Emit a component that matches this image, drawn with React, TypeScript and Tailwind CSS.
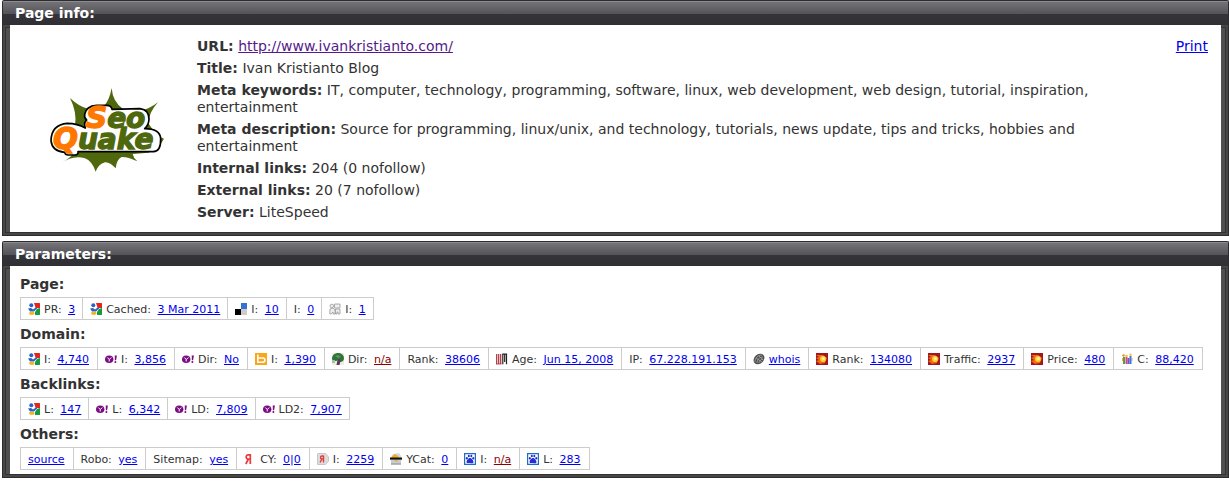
import type { ReactNode } from 'react';

type IconName =
  | 'google'
  | 'delicious'
  | 'digg'
  | 'yahoo'
  | 'bing'
  | 'dmoz'
  | 'archive'
  | 'whois'
  | 'semrush'
  | 'compete'
  | 'yandex'
  | 'yandexIndex'
  | 'yaca'
  | 'baidu';

type Param = {
  icon?: IconName;
  label?: string;
  value: string;
  missing?: boolean;
};

type Group = {
  title: string;
  wide?: boolean;
  params: Param[];
};

const GROUPS: Group[] = [
  {
    title: 'Page:',
    params: [
      { icon: 'google', label: 'PR:', value: '3' },
      { icon: 'google', label: 'Cached:', value: '3 Mar 2011' },
      { icon: 'delicious', label: 'I:', value: '10' },
      { label: 'I:', value: '0' },
      { icon: 'digg', label: 'I:', value: '1' },
    ],
  },
  {
    title: 'Domain:',
    wide: true,
    params: [
      { icon: 'google', label: 'I:', value: '4,740' },
      { icon: 'yahoo', label: 'I:', value: '3,856' },
      { icon: 'yahoo', label: 'Dir:', value: 'No' },
      { icon: 'bing', label: 'I:', value: '1,390' },
      { icon: 'dmoz', label: 'Dir:', value: 'n/a', missing: true },
      { label: 'Rank:', value: '38606' },
      { icon: 'archive', label: 'Age:', value: 'Jun 15, 2008' },
      { label: 'IP:', value: '67.228.191.153' },
      { icon: 'whois', value: 'whois' },
      { icon: 'semrush', label: 'Rank:', value: '134080' },
      { icon: 'semrush', label: 'Traffic:', value: '2937' },
      { icon: 'semrush', label: 'Price:', value: '480' },
      { icon: 'compete', label: 'C:', value: '88,420' },
    ],
  },
  {
    title: 'Backlinks:',
    params: [
      { icon: 'google', label: 'L:', value: '147' },
      { icon: 'yahoo', label: 'L:', value: '6,342' },
      { icon: 'yahoo', label: 'LD:', value: '7,809' },
      { icon: 'yahoo', label: 'LD2:', value: '7,907' },
    ],
  },
  {
    title: 'Others:',
    wide: true,
    params: [
      { value: 'source' },
      { label: 'Robo:', value: 'yes' },
      { label: 'Sitemap:', value: 'yes' },
      { icon: 'yandex', label: 'CY:', value: '0|0' },
      { icon: 'yandexIndex', label: 'I:', value: '2259' },
      { icon: 'yaca', label: 'YCat:', value: '0' },
      { icon: 'baidu', label: 'I:', value: 'n/a', missing: true },
      { icon: 'baidu', label: 'L:', value: '283' },
    ],
  },
];

const ICONS: Record<IconName, ReactNode> = {
  google: (
    <>
      <path d="M6 0h5.500l.5.500V5H9.500L8 6 7 3z" fill="#e5231b" />
      <path d="M9 6l3-1v6.500l-.5.500H7V9z" fill="#159a3c" />
      <circle cx="3.300" cy="2.200" r="2" fill="#2a63c4" />
      <path d="M0 5.500L3 5l2 1.500L8.500 4 9 5.500 6 8.500H2z" fill="#2a63c4" />
      <ellipse cx="3.800" cy="10.200" rx="2.800" ry="1.800" fill="#f3b229" />
    </>
  ),
  delicious: (
    <>
      <path d="M0 0h6v6H0z" fill="#fff" />
      <path d="M6 0h6v6H6z" fill="#3274d1" />
      <path d="M0 6h6v6H0z" fill="#000" />
      <path d="M6 6h6v6H6z" fill="#ccc" />
    </>
  ),
  digg: (
    <g fill="#eee" stroke="#999" strokeWidth=".8">
      <circle cx="2.800" cy="3" r="1.800" />
      <path d="M5.500 1h5.500v4H5.500z" />
      <path d="M1 6l3-1 2 2v4H4V9l-2 2H.8z" />
      <path d="M6.500 6h4.500v5H9V9H8v2H6.500z" />
    </g>
  ),
  yahoo: (
    <>
      <ellipse cx="4.200" cy="6.200" rx="4.200" ry="3.800" fill="#7b0d83" />
      <path d="M2.300 4.500l2 2 2-2M4.200 6.500v2" stroke="#fff" strokeWidth="1" fill="none" />
      <path d="M9.700 2.500h2.200l-.8 4.700H9.900z" fill="#7b0d83" />
      <circle cx="10.400" cy="9" r="1" fill="#7b0d83" />
    </>
  ),
  bing: (
    <>
      <path d="M0 0h12v12H0z" fill="#faa61a" />
      <path
        d="M2.800 1.500V9.200h5a2 2 0 0 0 0-4.200H2.800"
        fill="none"
        stroke="#fff"
        strokeWidth="1.500"
      />
    </>
  ),
  dmoz: (
    <>
      <path d="M0 0h12v12H0z" fill="#eeeedb" />
      <path d="M0 6C0 2 3 0 6 0s6 2 6 5-2 4-4 4L7 7 4 8 1 8z" fill="#2f7438" />
      <path d="M3 3l3-1 3 2-3 1z" fill="#599c54" />
      <path d="M4.500 12l1-5 2.500-1 .5 2L7.500 12z" fill="#58395c" />
      <path d="M0 7h3v3H0z" fill="#9cc5a2" />
    </>
  ),
  archive: (
    <>
      <path d="M.7 1v10M2.700 1v10M4.700 1v10" stroke="#a82f38" strokeWidth="1.200" />
      <path d="M0 11h5.500" stroke="#a82f38" strokeWidth=".8" />
      <path d="M6.800 11.300V1.200h3.700v10M8.700 1v8" stroke="#222" strokeWidth="1.200" fill="none" />
    </>
  ),
  whois: (
    <>
      <ellipse cx="6" cy="6" rx="4.600" ry="6" transform="rotate(48 6 6)" fill="#4f4f4f" />
      <g fill="none" stroke="#b5b5b5" strokeWidth=".7">
        <path d="M2 9C2 5 5 2 9 2" />
        <path d="M4 10c0-3 2-6 6-6" />
        <path d="M6 10c0-2 2-4 4-4M3 5l6 4M6 3l4 4" />
      </g>
    </>
  ),
  semrush: (
    <>
      <path d="M0 0h12v12H0z" fill="#a31621" />
      <path d="M0 2l7 0 4 3-2 5-5 1L0 8l3-1-3-2 3-1z" fill="#f06a12" />
      <circle cx="7" cy="6" r="2.900" fill="#ffd335" />
      <circle cx="7.500" cy="5.700" r="1.400" fill="#fff39a" />
    </>
  ),
  compete: (
    <>
      <path d="M2 4h2v7H2z" fill="#4aa63b" />
      <path d="M4.500 4h2v7h-2z" fill="#e9398f" />
      <path d="M6.500 5h2v6h-2z" fill="#814fc2" />
      <path d="M8.500 3h2v8h-2z" fill="#297fdc" />
      <circle cx="2.500" cy="2.500" r="1.200" fill="#f08b24" />
      <circle cx="5.500" cy="3" r="1.200" fill="#f5b43a" />
      <circle cx="9.500" cy="1.800" r="1.200" fill="#f5c33c" />
      <path d="M1.500 5v3M11 5v3" stroke="#f08b24" strokeWidth=".8" />
    </>
  ),
  yandex: (
    <path
      d="M6.300 1v10M6.300 1.800H4.200C1.500 1.800 1.500 6 4.200 6h2.100M4.500 6L1.800 11"
      fill="none"
      stroke="#f0373b"
      strokeWidth="1.700"
    />
  ),
  yandexIndex: (
    <>
      <path d="M1 .5h7.500L11.500 4v4L8.500 11.500H.5V1z" fill="#ddd" stroke="#bbb" strokeWidth=".8" />
      <path
        d="M6.500 2.500v7M6.500 3H5C3 3 3 6 5 6h1.500M5 6L3 9.500"
        fill="none"
        stroke="#e23b3b"
        strokeWidth="1.400"
      />
    </>
  ),
  yaca: (
    <>
      <path d="M3 1l6-1 2 3v2H2z" fill="#d5d8dc" />
      <path d="M2 3l3-2 3 2 1 2H1z" fill="#f0ad29" />
      <path d="M0 4.500h12v2.200H0z" fill="#17130d" />
      <path d="M1 7h10v4.500H1z" fill="#c9cdd2" />
      <path d="M4 7h4L6.500 9z" fill="#f0ad29" />
      <path d="M1 11h10" stroke="#8b8f94" />
    </>
  ),
  baidu: (
    <>
      <path d="M.6 .6h10.800v10.800H.6z" fill="#fff" stroke="#1e6fc4" strokeWidth="1.200" />
      <g fill="#2430d6">
        <ellipse cx="2.800" cy="5.200" rx="1" ry="1.300" />
        <ellipse cx="4.800" cy="3" rx="1" ry="1.300" />
        <ellipse cx="7.300" cy="3" rx="1" ry="1.300" />
        <ellipse cx="9.300" cy="5.200" rx="1" ry="1.300" />
        <path d="M6 5c1.500 0 3.500 2.500 3.500 4S8 10.300 6 10 2.500 10.500 2.500 9 4.500 5 6 5z" />
      </g>
    </>
  ),
};

function Icon({ name }: { name: IconName }) {
  return (
    <svg viewBox="0 0 12 12" className="mr-1 inline-block size-3 align-[-2px]" aria-hidden="true">
      {ICONS[name]}
    </svg>
  );
}

function Logo() {
  return (
    <svg
      viewBox="30 33 345 255"
      className="h-[85px] w-[115px] font-['DejaVu_Sans',sans-serif] text-[84px] font-bold italic"
      role="img"
      aria-label="SeoQuake"
    >
      <path
        d="M90 66Q115 90 140 97L190 92Q208 75 215 36Q218 78 250 100L300 105Q330 98 354 79Q328 108 324 140L350 178L372 188L355 215L325 230L278 234Q280 246 292 256Q262 242 245 243Q230 250 227 277Q210 258 195 259Q175 264 167 287Q156 255 135 247Q100 236 62 262Q95 245 108 222L105 150Q112 110 90 66Z"
        fill="#4f680d"
      />
      <path
        d="M134 115Q138 90 170 88H200Q214 88 216 100L300 98Q328 102 327 130Q326 148 314 158Q360 158 362 188Q363 226 340 227H114Q116 237 104 237H84Q76 237 74 229Q36 226 33 194Q34 146 82 142Q112 142 136 156Q130 140 140 132Q132 126 134 115Z"
        fill="#fff"
        stroke="#000"
        strokeWidth="5"
        strokeLinejoin="round"
      />
      <g fill="#4f680d" stroke="#4f680d" strokeWidth="4">
        <text x="138" y="157">
          <tspan className="fill-[#ff7800] stroke-[#ff7800] text-[88px]">S</tspan>eo
        </text>
        <text x="39" y="219">
          <tspan className="fill-[#ff7800] stroke-[#ff7800] text-[88px]">Q</tspan>uake
        </text>
      </g>
    </svg>
  );
}

function Panel({ title, children }: { title: string; children: ReactNode }) {
  return (
    <section>
      <h2 className="h-[25px] rounded-t-[2px] border-x border-t border-[#2c2c30] bg-[linear-gradient(#8b8b90_0_1px,#727277_1px,#535358_13px,#353439_13px,#302f34_100%)] px-3 text-[14px] leading-6 font-bold text-white">
        {title}
      </h2>
      <div className="border-x border-b border-[#2c2c2c] bg-[#505050] px-[7px] pb-[3px] shadow-[inset_0_0_0_2px_#474747,inset_0_0_0_3px_#333]">
        <div className="bg-white">{children}</div>
      </div>
    </section>
  );
}

function InfoRow({ label, children }: { label: string; children: ReactNode }) {
  return (
    <p>
      <b>{label}</b> {children}
    </p>
  );
}

function ParamTable({ title, wide, params }: Group) {
  return (
    <div>
      <h3 className="mb-1 text-[14px] leading-[17px] font-bold">{title}</h3>
      <table className="border-collapse text-[11px] leading-[13px]" aria-label={title}>
        <tbody>
          <tr>
            {params.map((param, i) => (
              <td
                key={i}
                className={`h-[22px] border border-[#ccc] pt-[2px] pl-[7px] whitespace-nowrap ${
                  wide ? 'pr-2' : 'pr-[7px]'
                }`}
              >
                {param.icon && <Icon name={param.icon} />}
                {param.label && <span className="mr-[3px]">{param.label} </span>}
                <a
                  href="#"
                  className={`underline ${param.missing ? 'text-[#8b0000]' : 'text-[#0000ee]'}`}
                >
                  {param.value}
                </a>
              </td>
            ))}
          </tr>
        </tbody>
      </table>
    </div>
  );
}

export default function App() {
  return (
    <main className="flex flex-col gap-[5px] bg-white pl-[2px] font-[Verdana,'DejaVu_Sans',sans-serif] text-[#333]">
      <Panel title="Page info:">
        <div className="flex items-start pt-[13px] pr-[13px] pb-[11px] pl-5 text-[14px] leading-[17px]">
          <div className="w-[167px] shrink-0 self-center pl-5">
            <Logo />
          </div>
          <div className="flex flex-1 flex-col gap-[5px] pr-20">
            <InfoRow label="URL:">
              <a href="#" className="text-[#551a8b] underline">
                http://www.ivankristianto.com/
              </a>
            </InfoRow>
            <InfoRow label="Title:">Ivan Kristianto Blog</InfoRow>
            <InfoRow label="Meta keywords:">
              IT, computer, technology, programming, software, linux, web development, web design,
              tutorial, inspiration, entertainment
            </InfoRow>
            <InfoRow label="Meta description:">
              Source for programming, linux/unix, and technology, tutorials, news update, tips and
              tricks, hobbies and entertainment
            </InfoRow>
            <InfoRow label="Internal links:">204 (0 nofollow)</InfoRow>
            <InfoRow label="External links:">20 (7 nofollow)</InfoRow>
            <InfoRow label="Server:">LiteSpeed</InfoRow>
          </div>
          <a href="#" className="text-[#0000ee] underline">
            Print
          </a>
        </div>
      </Panel>

      <Panel title="Parameters:">
        <div className="flex flex-col gap-[6px] px-[10px] pt-[10px] pb-1">
          {GROUPS.map((group) => (
            <ParamTable key={group.title} {...group} />
          ))}
        </div>
      </Panel>
    </main>
  );
}
